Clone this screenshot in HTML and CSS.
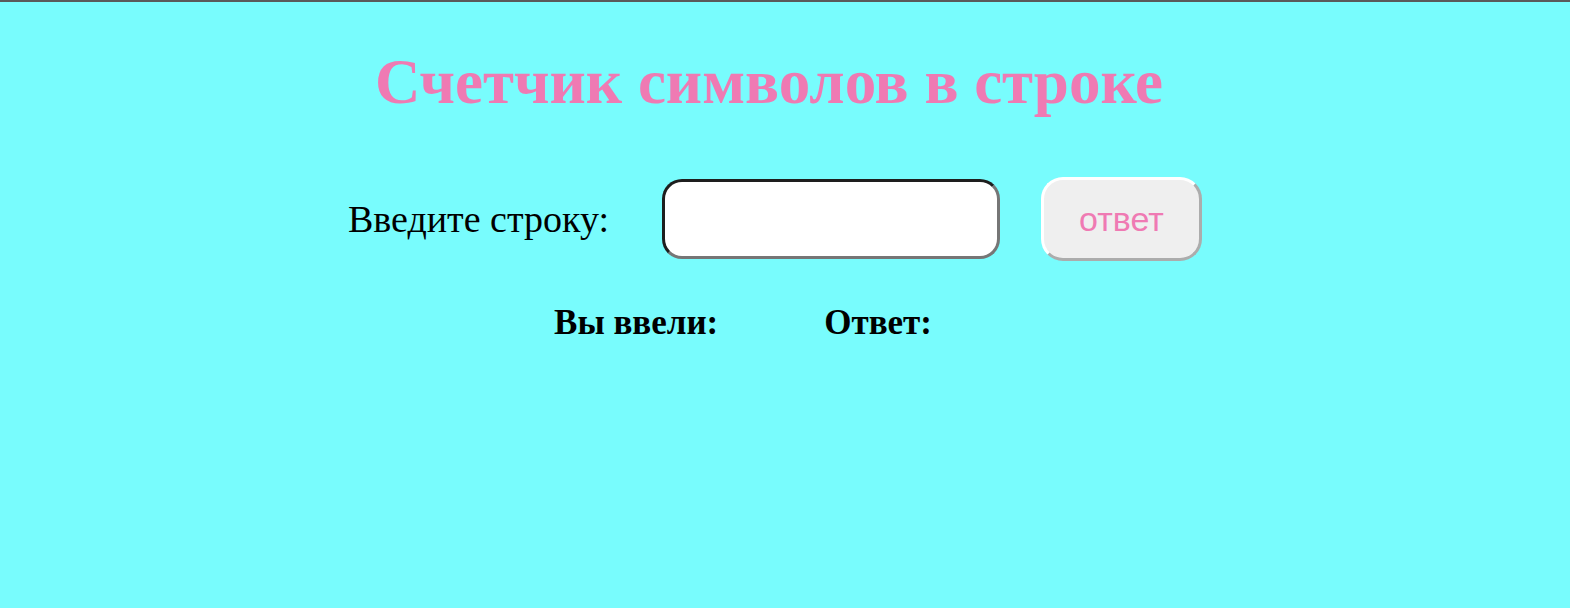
FILE: index.html
```html
<!DOCTYPE html>
<html lang="ru">
<head>
<meta charset="utf-8">
<title>Счетчик символов в строке</title>
<link rel="stylesheet" href="styles.css">
</head>
<body>
<div class="topline"></div>
<main class="page">
  <h1 class="title">Счетчик символов в строке</h1>
  <div class="form-row">
    <label class="label" for="inp">Введите строку:</label>
    <input class="field" id="inp" type="text">
    <button class="btn" type="button">ответ</button>
  </div>
  <div class="result-row">
    <span class="result">Вы ввели:</span>
    <span class="result">Ответ:</span>
  </div>
</main>
</body>
</html>
```

FILE: styles.css
```css
html, body {
  margin: 0;
  padding: 0;
  background: #78fcfd;
  height: 100%;
}
body {
  font-family: "Liberation Serif", "Times New Roman", serif;
  color: #000;
}
.topline {
  height: 2px;
  background: #5a5a5a;
}
.page {
  display: flex;
  flex-direction: column;
  align-items: stretch;
}
.title {
  margin: 0;
  padding: 40px 32px 0 0;
  text-align: center;
  font-size: 63px;
  line-height: 80px;
  font-weight: bold;
  color: #ef7ab3;
}
.form-row {
  display: flex;
  justify-content: center;
  align-items: center;
  padding: 55px 20px 0 0;
}
.label {
  font-size: 38px;
  margin-right: 53px;
}
.field {
  box-sizing: border-box;
  width: 338px;
  height: 80px;
  border: 3px solid;
  border-color: #1e1e1e #767676 #767676 #1e1e1e;
  border-radius: 20px;
  background: #fff;
  margin-right: 41px;
}
.btn {
  box-sizing: border-box;
  width: 161px;
  height: 84px;
  border: 3px solid;
  border-color: #fff #acacac #acacac #fff;
  border-radius: 22px;
  background: #efefef;
  color: #ef7ab3;
  font-family: "Liberation Sans", Arial, sans-serif;
  font-size: 34px;
  padding: 0;
}
.result-row {
  display: flex;
  justify-content: center;
  gap: 106px;
  padding: 42px 84px 0 0;
}
.result {
  font-size: 35px;
  font-weight: bold;
}
```
